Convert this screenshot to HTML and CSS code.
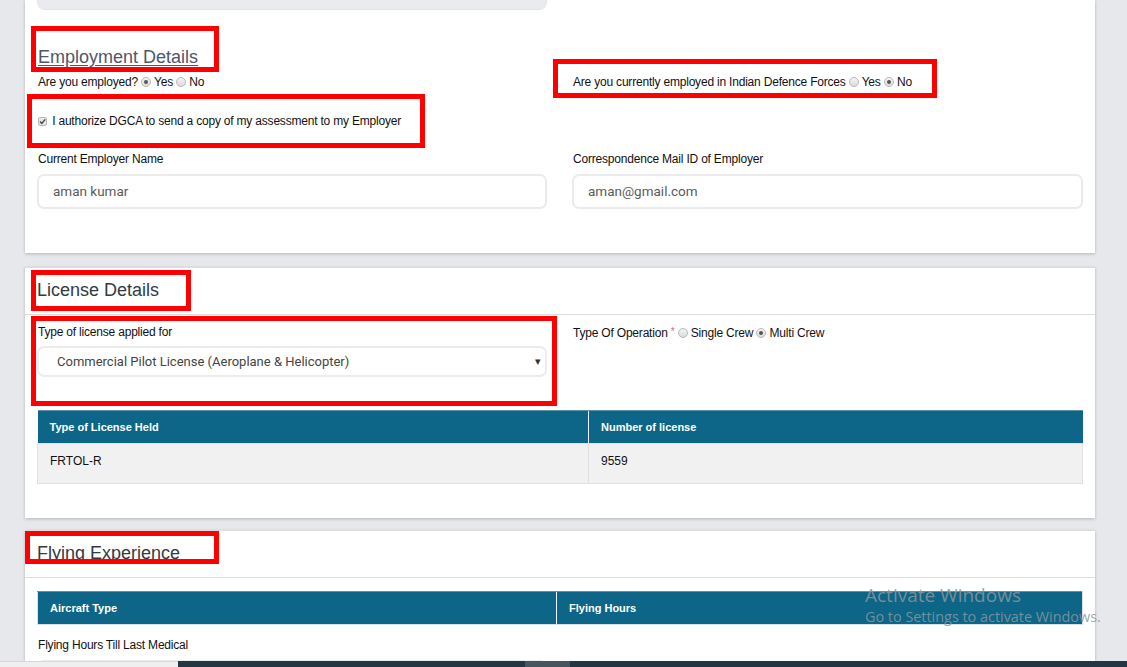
FILE: index.html
```html
<!DOCTYPE html>
<html lang="en">
<head>
<meta charset="utf-8">
<title>Application Form</title>
<link rel="stylesheet" href="styles.css">
</head>
<body>
<main class="page">

  <section class="panel panel-emp">
    <div class="stub"></div>
    <div class="grid2">
      <h3 class="emp-title">Employment Details</h3>
      <div></div>
      <p class="q">Are you employed? <span class="radio on"></span> Yes <span class="radio"></span> No</p>
      <p class="q">Are you currently employed in Indian Defence Forces <span class="radio"></span> Yes <span class="radio on"></span> No</p>
      <p class="q auth span2"><span class="check"><svg viewBox="0 0 9 9" width="9" height="9"><path d="M2 4.6 L3.8 6.4 L7.2 2.4" fill="none" stroke="#444" stroke-width="1.4"/></svg></span> I authorize DGCA to send a copy of my assessment to my Employer</p>
      <div class="field">
        <label class="lbl">Current Employer Name</label>
        <div class="input">aman kumar</div>
      </div>
      <div class="field">
        <label class="lbl">Correspondence Mail ID of Employer</label>
        <div class="input">aman@gmail.com</div>
      </div>
    </div>
    <div class="mark m1"></div>
    <div class="mark m2"></div>
    <div class="mark m3"></div>
  </section>

  <section class="panel panel-lic">
    <header class="panel-head"><h3>License Details</h3></header>
    <div class="panel-body">
      <div class="grid2">
        <div class="field">
          <label class="lbl">Type of license applied for</label>
          <div class="select">Commercial Pilot License (Aeroplane &amp; Helicopter)<span class="caret">&#9662;</span></div>
        </div>
        <p class="q op">Type Of Operation <span class="req">*</span> <span class="radio"></span> Single Crew <span class="radio on"></span> Multi Crew</p>
      </div>
      <table class="tbl tbl-lic">
        <thead><tr><th class="c1">Type of License Held</th><th>Number of license</th></tr></thead>
        <tbody><tr><td>FRTOL-R</td><td>9559</td></tr></tbody>
      </table>
    </div>
    <div class="mark m4"></div>
    <div class="mark m5"></div>
  </section>

  <section class="panel panel-exp">
    <header class="panel-head"><h3>Flying Experience</h3></header>
    <div class="panel-body">
      <table class="tbl tbl-exp">
        <thead><tr><th class="c1">Aircraft Type</th><th>Flying Hours</th></tr></thead>
      </table>
      <label class="lbl last">Flying Hours Till Last Medical</label>
      <div class="input short"></div>
    </div>
    <div class="mark m6"></div>
  </section>

</main>

<div class="taskbar"><div class="tb-left"></div><div class="tb-dark"></div><div class="tb-mid"></div><div class="tb-dark grow"></div></div>

<div class="activate">
  <div class="act-1">Activate Windows</div>
  <div class="act-2">Go to Settings to activate Windows.</div>
</div>
</body>
</html>
```
FILE: styles.css
```css
html, body {
  margin: 0;
  padding: 0;
}
body {
  background: #e7e8ec;
  font-family: "Liberation Sans", Arial, sans-serif;
  font-size: 12px;
  color: #222;
  width: 1127px;
  height: 667px;
  overflow: hidden;
  position: relative;
}
.page {
  padding-left: 25px;
  width: 1070px;
}
.panel {
  position: relative;
  background: #fff;
  box-shadow: 0 1px 3px rgba(0, 0, 0, 0.22);
  margin-bottom: 14px;
}
.panel-lic {
  margin-bottom: 12px;
}
.panel-lic, .panel-exp {
  border-top: 1px solid #dcdcdc;
}
.stub {
  margin-left: 12px;
  width: 510px;
  height: 10px;
  background: #e9ebee;
  border: 1px solid #e2e4e7;
  border-top: 0;
  border-radius: 0 0 8px 8px;
  box-sizing: border-box;
}
.grid2 {
  display: grid;
  grid-template-columns: 510px 511px;
  column-gap: 25px;
  padding: 0 12px;
}
.panel-body .grid2 {
  padding: 0;
}
.span2 {
  grid-column: 1 / span 2;
}
.emp-title {
  margin: 36px 0 0 1px;
  font-weight: normal;
  font-size: 18px;
  line-height: 22px;
  color: #51566a;
  text-decoration: underline;
  text-underline-offset: 2px;
}
.q {
  margin: 6px 0 0 1px;
  line-height: 16px;
  font-size: 12px;
  letter-spacing: -0.2px;
  color: #111;
}
.auth {
  margin-top: 23px;
}
.radio {
  display: inline-block;
  width: 8px;
  height: 8px;
  border: 1px solid #b9b9b9;
  border-radius: 50%;
  background: linear-gradient(#f4f4f4, #dcdcdc);
  vertical-align: -1px;
  position: relative;
}
.radio.on::after {
  content: "";
  position: absolute;
  left: 2px;
  top: 2px;
  width: 4px;
  height: 4px;
  border-radius: 50%;
  background: #555;
}
.check {
  display: inline-block;
  width: 9px;
  height: 9px;
  border: 1px solid #bbb;
  border-radius: 2px;
  background: #e6e6e6;
  vertical-align: -1px;
  box-sizing: border-box;
  line-height: 0;
  margin-right: 2px;
}
.check svg {
  margin: -1px 0 0 -1px;
}
.field {
  margin-top: 22px;
}
.lbl {
  display: block;
  line-height: 16px;
  margin-left: 1px;
  letter-spacing: -0.2px;
  color: #111;
}
.input {
  margin-top: 7px;
  height: 35px;
  border: 2px solid #ebebeb;
  border-radius: 7px;
  box-sizing: border-box;
  padding: 0 14px;
  font-family: Roboto, "Liberation Sans", sans-serif;
  font-size: 13.5px;
  line-height: 31px;
  color: #5b5b5b;
}
.panel-emp {
  padding-bottom: 44px;
}
.panel-head {
  height: 47px;
  border-bottom: 1px solid #ddd;
  padding: 0 12px;
  box-sizing: border-box;
}
.panel-head h3 {
  margin: 0;
  padding-top: 11px;
  font-weight: normal;
  font-size: 18px;
  line-height: 22px;
  color: #333a44;
}
.panel-body {
  padding: 9px 12px 34px;
}
.panel-lic .field {
  margin-top: 0;
}
.op {
  margin-top: 0;
}
.req {
  color: #e06464;
  font-size: 10px;
  vertical-align: 2px;
}
.select {
  position: relative;
  margin-top: 6px;
  height: 31px;
  border: 2px solid #ececec;
  border-radius: 7px;
  box-sizing: border-box;
  padding: 0 18px;
  font-family: Roboto, "Liberation Sans", sans-serif;
  font-size: 13px;
  line-height: 27px;
  color: #444;
}
.caret {
  position: absolute;
  right: 4px;
  top: 0;
  font-size: 11px;
  color: #333;
}
.tbl {
  width: 1046px;
  border-collapse: collapse;
  table-layout: fixed;
}
.tbl-lic {
  margin-top: 33px;
}
.tbl th {
  background: #0d6688;
  color: #fff;
  text-align: left;
  font-weight: bold;
  font-size: 11px;
  height: 33px;
  padding: 0 12px;
  border-top: 1px solid #5a93ab;
  border-bottom: 1px solid #d6e3ea;
  box-sizing: border-box;
}
.tbl th + th {
  border-left: 1px solid #e9f2f6;
}
.tbl-lic .c1 { width: 551px; box-sizing: border-box; }
.tbl-exp .c1 { width: 519px; box-sizing: border-box; }
.tbl td {
  background: #f1f1f1;
  height: 40px;
  padding: 9px 12px 0;
  vertical-align: top;
  line-height: 16px;
  box-sizing: border-box;
  border: 1px solid #e0e0e0;
  border-top: 0;
  color: #111;
}
.panel-exp .panel-body {
  padding-top: 13px;
}
.tbl-exp th {
  border-left: 1px solid #d6e3ea;
}
.tbl-exp th:last-child {
  border-right: 1px solid #d6e3ea;
}
.last {
  margin-top: 12px;
}
.short {
  width: 510px;
}
.mark {
  position: absolute;
  border: 5px solid #ff0000;
  box-sizing: border-box;
}
.m1 { left: 6px;   top: 26px;  width: 188px; height: 46px; }
.m2 { left: 528px; top: 59px;  width: 384px; height: 39px; }
.m3 { left: 2px;   top: 94px;  width: 398px; height: 54px; }
.m4 { left: 6px;   top: 2px;   width: 160px; height: 41px; }
.m5 { left: 6px;   top: 48px;  width: 526px; height: 90px; }
.m6 { left: 0;     top: 0;     width: 194px; height: 33px; }
.taskbar {
  position: absolute;
  left: 0;
  bottom: 0;
  width: 1127px;
  height: 6px;
  display: flex;
}
.tb-left {
  width: 178px;
  background: #efefef;
  border-top: 1px solid #d8d8d8;
}
.tb-dark {
  width: 347px;
  background: #223643;
}
.tb-dark.grow {
  flex: 1;
}
.tb-mid {
  width: 45px;
  background: #46565f;
}
.activate {
  position: absolute;
  left: 865px;
  top: 583px;
  color: rgba(140, 150, 155, 0.85);
  font-family: "Open Sans", "DejaVu Sans", sans-serif;
  pointer-events: none;
}
.act-1 {
  font-size: 19px;
  line-height: 24px;
}
.act-2 {
  font-size: 14.4px;
  line-height: 20px;
}
```
